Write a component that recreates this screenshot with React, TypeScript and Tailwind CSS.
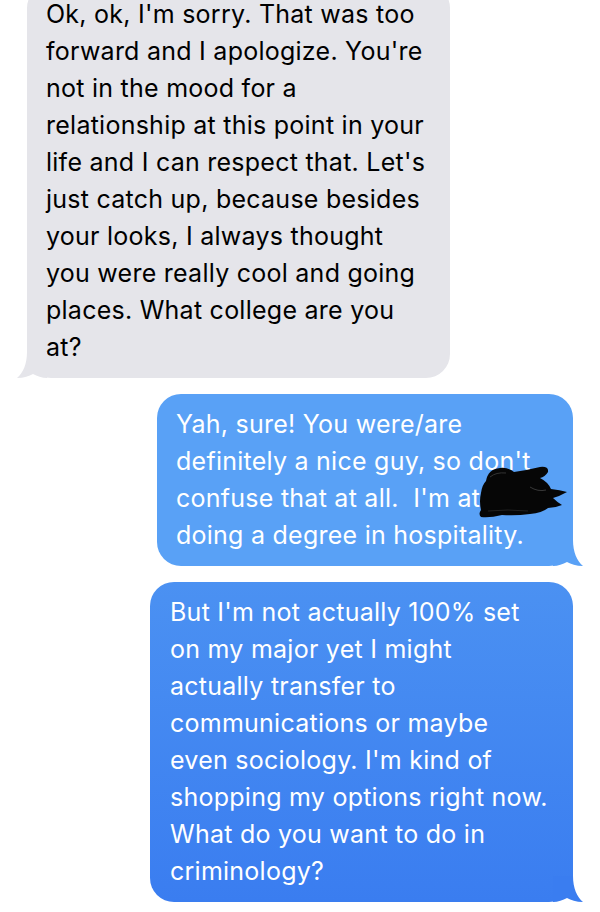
const incoming = [
  "Ok, ok, I'm sorry. That was too",
  "forward and I apologize. You're",
  "not in the mood for a",
  "relationship at this point in your",
  "life and I can respect that. Let's",
  "just catch up, because besides",
  "your looks, I always thought",
  "you were really cool and going",
  "places. What college are you",
  "at?",
];

const reply1 = [
  "Yah, sure! You were/are",
  "definitely a nice guy, so don't",
  "confuse that at all.  I'm at",
  "doing a degree in hospitality.",
];

const reply2 = [
  "But I'm not actually 100% set",
  "on my major yet I might",
  "actually transfer to",
  "communications or maybe",
  "even sociology. I'm kind of",
  "shopping my options right now.",
  "What do you want to do in",
  "criminology?",
];

function Lines({ lines }: { lines: string[] }) {
  return (
    <>
      {lines.map((l, i) => (
        <span key={i} className="block whitespace-pre">
          {l}
        </span>
      ))}
    </>
  );
}

function LeftTail() {
  return (
    <svg className="absolute -left-[10px] bottom-0 h-[26px] w-[30px]" viewBox="0 0 30 26">
      <path d="M30 0 L10 0 C10 12 6 21 0 26 C7 26 12 24 16 22 C20 24 25 26 30 26 Z" fill="#e5e5ea" />
    </svg>
  );
}

function RightTail({ color }: { color: string }) {
  return (
    <svg className="absolute -right-[10px] bottom-0 h-[26px] w-[30px]" viewBox="0 0 30 26">
      <path d="M0 0 L20 0 C20 12 24 21 30 26 C23 26 18 24 14 22 C10 24 5 26 0 26 Z" fill={color} />
    </svg>
  );
}

function Scribble() {
  return (
    <svg className="pointer-events-none absolute left-[321px] top-[71px] h-[56px] w-[90px]" viewBox="0 0 90 56">
      <path
        d="M8 16 Q10 4 22 3 Q30 2 36 7 Q50 5 62 2 Q71 1 70 7 Q67 12 62 13 Q70 17 73 24 Q82 25 89 27 Q82 31 75 33 Q79 37 84 40 Q77 43 70 43 Q64 48 52 49 Q38 51 24 50 Q12 53 3 52 Q0 49 3 45 Q1 36 3 28 Q4 20 8 16 Z"
        fill="#060606"
      />
      <path d="M12 12 Q18 7 28 8" stroke="#333" strokeWidth="1" fill="none" />
      <path d="M52 22 Q60 27 68 25" stroke="#444" strokeWidth="0.8" fill="none" />
      <path d="M10 46 Q30 44 50 46" stroke="#2a2a2a" strokeWidth="0.8" fill="none" />
    </svg>
  );
}

export default function App() {
  return (
    <div
      className="h-[912px] w-[600px] overflow-hidden bg-white text-[25px] leading-[37px] tracking-[0.25px]"
      style={{ fontFamily: "Inter, 'Noto Sans', sans-serif" }}
    >
      <div className="-mt-[16px] flex flex-col gap-4 px-[27px]">
        {/* gray incoming bubble, top cut off */}
        <div className="relative w-[423px] self-start rounded-[24px] bg-[#e5e5ea] px-[19px] py-3 text-black">
          <LeftTail />
          <Lines lines={incoming} />
        </div>

        {/* blue replies */}
        <div className="relative w-[416px] self-end rounded-[24px] bg-[#59a1f6] px-[19px] py-3 text-white">
          <RightTail color="#59a1f6" />
          <Lines lines={reply1} />
          <Scribble />
        </div>

        <div className="relative w-[423px] self-end rounded-[24px] bg-[linear-gradient(to_bottom,#4b91f2,#3a7df0)] px-5 py-3 text-white">
          <RightTail color="#3a7df0" />
          <Lines lines={reply2} />
        </div>
      </div>
    </div>
  );
}
